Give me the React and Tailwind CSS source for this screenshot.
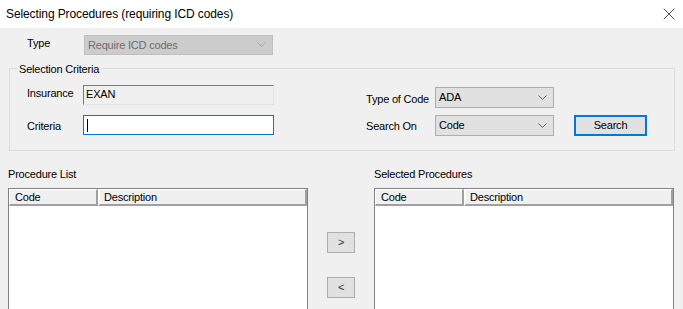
import { X } from "lucide-react"

function Chevron({ color = "#606060" }) {
  return (
    <svg width="9" height="6" viewBox="0 0 9 6" className="shrink-0">
      <path d="M0.5 0.5 L4.5 4.5 L8.5 0.5" fill="none" stroke={color} strokeWidth="1" />
    </svg>
  )
}

function Combo({ value, width, height = "h-[21px]", disabled = false }) {
  return (
    <div
      className={`${width} ${height} flex items-center justify-between pl-[3px] pr-[6px] border ${
        disabled ? "bg-[#cccccc] border-[#bfbfbf] text-[#6d6d6d]" : "bg-[#e1e1e1] border-[#adadad] text-black"
      }`}
    >
      <span>{value}</span>
      <Chevron color={disabled ? "#a6a6a6" : "#606060"} />
    </div>
  )
}

function ListBox() {
  return (
    <div className="w-[300px] h-[130px] border border-[#828282] bg-white">
      <div className="flex h-[17px]">
        <div className="w-[89px] h-full bg-[#f0f0f0] border-t border-l border-white border-r-2 border-b-2 border-r-[#a0a0a0] border-b-[#a0a0a0] pl-[5px] leading-[14px]">
          Code
        </div>
        <div className="flex-1 h-full bg-[#f0f0f0] border-t border-l-2 border-white border-r-2 border-b-2 border-r-[#a0a0a0] border-b-[#a0a0a0] pl-[4px] leading-[14px]">
          Description
        </div>
      </div>
    </div>
  )
}

function SmallButton({ children }) {
  return (
    <div className="w-[28px] h-[21px] bg-[#e1e1e1] border border-[#adadad] flex items-center justify-center text-[11px] text-[#333]">
      {children}
    </div>
  )
}

export default function App() {
  return (
    <div
      className="w-[683px] h-[309px] overflow-hidden bg-[#f0f0f0] text-[11px] tracking-[-0.2px] text-black"
      style={{ fontFamily: '"Liberation Sans", Arial, sans-serif' }}
    >
      <div className="h-[28px] bg-white flex items-center justify-between pl-[6px] pr-[4px]">
        <span className="text-[12px] tracking-[-0.1px]">Selecting Procedures (requiring ICD codes)</span>
        <X size={20} strokeWidth={0.9} color="#111" />
      </div>

      <div className="flex items-start pt-[7px]">
        <span className="w-[84px] pl-[27px]">Type</span>
        <Combo value="Require ICD codes" width="w-[189px]" height="h-[20px]" disabled />
      </div>

      <div className="relative ml-[9px] mt-[13px] w-[666px] h-[83px] border border-[#dcdcdc]">
        <span className="absolute -top-[8px] left-[7px] bg-[#f0f0f0] px-[2px]">Selection Criteria</span>

        <div className="flex items-start pt-[16px]">
          <span className="w-[73px] pl-[17px]">Insurance</span>
          <div className="w-[191px] h-[20px] bg-[#f0f0f0] border border-t-[#7a7a7a] border-l-[#7a7a7a] border-r-[#e3e3e3] border-b-[#e3e3e3] pl-[2px] leading-[17px]">
            EXAN
          </div>
          <span className="ml-[92px] w-[69px] mt-[6px]">Type of Code</span>
          <div className="mt-[2px]">
            <Combo value="ADA" width="w-[119px]" height="h-[21px]" />
          </div>
        </div>

        <div className="flex items-start mt-[7px]">
          <span className="w-[73px] pl-[17px] pt-[3px]">Criteria</span>
          <div className="w-[191px] h-[20px] bg-white border border-[#0078d7] pl-[3px] flex items-center">
            <span className="w-px h-[13px] bg-black" />
          </div>
          <span className="ml-[92px] w-[69px] pt-[3px]">Search On</span>
          <Combo value="Code" width="w-[119px]" height="h-[21px]" />
          <div className="ml-[20px] w-[73px] h-[21px] bg-[#e1e1e1] border-2 border-[#0078d7] flex items-center justify-center">
            Search
          </div>
        </div>
      </div>

      <div className="flex mt-[17px] pl-[8px]">
        <div className="flex flex-col">
          <span className="h-[13px] leading-[13px]">Procedure List</span>
          <div className="mt-[7px]">
            <ListBox />
          </div>
        </div>
        <div className="flex flex-col ml-[19px] pt-[64px] gap-[24px]">
          <SmallButton>&gt;</SmallButton>
          <SmallButton>&lt;</SmallButton>
        </div>
        <div className="flex flex-col ml-[19px]">
          <span className="h-[13px] leading-[13px]">Selected Procedures</span>
          <div className="mt-[7px]">
            <ListBox />
          </div>
        </div>
      </div>
    </div>
  )
}
